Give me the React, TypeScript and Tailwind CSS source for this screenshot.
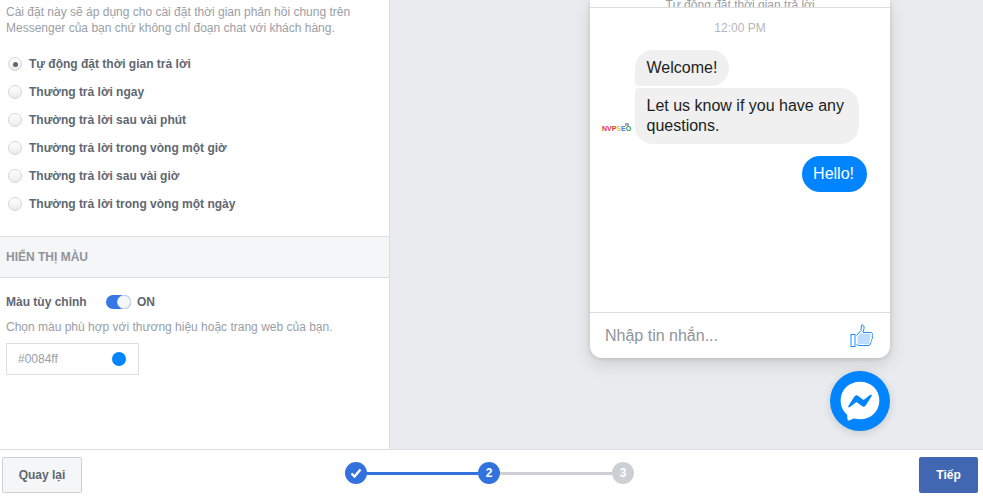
import { FaFacebookMessenger } from 'react-icons/fa';

const options = [
  'Tự động đặt thời gian trả lời',
  'Thường trả lời ngay',
  'Thường trả lời sau vài phút',
  'Thường trả lời trong vòng một giờ',
  'Thường trả lời sau vài giờ',
  'Thường trả lời trong vòng một ngày',
];

function Radio({ label, checked }: { label: string; checked: boolean }) {
  return (
    <div className="flex h-7 items-center pl-2">
      <span className="flex h-[14px] w-[14px] items-center justify-center rounded-full border border-[#d3d6db] bg-linear-to-b from-white to-[#e9ebee]">
        {checked && <span className="h-[5px] w-[5px] rounded-full bg-[#606770]" />}
      </span>
      <span className="ml-[7px] text-xs font-bold text-[#606770]">{label}</span>
    </div>
  );
}

function SettingsPanel() {
  return (
    <div className="w-[390px] shrink-0 border-r border-[#dadde1] bg-white">
      <p className="px-[6px] pt-[4px] text-xs leading-4 text-[#9a9ea6]">
        Cài đặt này sẽ áp dụng cho cài đặt thời gian phản hồi chung trên
        <br />
        Messenger của bạn chứ không chỉ đoạn chat với khách hàng.
      </p>
      <div className="mt-[14px]">
        {options.map((label, index) => (
          <Radio key={label} label={label} checked={index === 0} />
        ))}
      </div>
      <div className="mt-[18px] flex h-[42px] items-center border-y border-[#dadde1] bg-[#f5f6f7] px-[6px] text-xs font-bold text-[#90949c]">
        HIỂN THỊ MÀU
      </div>
      <div className="flex items-center pl-[6px] pt-[16px]">
        <span className="w-[100px] text-xs font-bold text-[#606770]">Màu tùy chỉnh</span>
        <span className="flex h-[14px] w-[25px] justify-end rounded-full bg-[#3578e5]">
          <span className="h-[14px] w-[14px] rounded-full border border-[#dadde1] bg-[#f5f6f7]" />
        </span>
        <span className="ml-[6px] text-xs font-bold text-[#606770]">ON</span>
      </div>
      <p className="px-[6px] pt-[9px] text-xs leading-4 text-[#9a9ea6]">
        Chọn màu phù hợp với thương hiệu hoặc trang web của bạn.
      </p>
      <div className="ml-[6px] mt-[8px] flex h-[32px] w-[133px] items-center justify-between border border-[#dddfe2] pl-[11px] pr-[12px] text-xs text-[#9a9ea6]">
        #0084ff
        <span className="h-[14px] w-[14px] rounded-full bg-[#0084ff]" />
      </div>
    </div>
  );
}

// thumb outline with a pale fill, the cuff stays empty
function LikeIcon() {
  return (
    <svg width="24" height="24" viewBox="0 0 24 24" fill="none" stroke="#1f8fff" strokeWidth="1">
      <rect x="1" y="10.5" width="4" height="12" />
      <path
        d="M6.5 11.5 L11 6.5 L11.5 1 C13.5 0.5 14.5 2.5 14 4.5 L13 8.5 L20.5 8.5 C23 8.5 23 11 22 12 C23 13.5 22.5 15 21.5 15.5 C22 17 21.5 18.5 20.5 19 C20.5 21 19.5 21.5 18 21.5 L9 21.5 L6.5 20.5"
      />
      <path d="M7.5 12.5 L11 9 L13 10 L20.5 10 L19.5 20 L9 20 L7.5 19.5 Z" fill="#bcdcff" stroke="none" />
    </svg>
  );
}

function ChatPreview() {
  return (
    <div className="flex min-w-0 flex-1 flex-col items-start overflow-hidden bg-[#e9ebee] pl-[200px]">
      <div className="flex h-[358px] w-[300px] shrink-0 flex-col rounded-b-[12px] bg-white text-[16px] leading-5 shadow-[0_6px_18px_rgba(0,0,0,0.12),0_1px_4px_rgba(0,0,0,0.14)]">
        <div className="h-[8px] overflow-hidden border-b border-[#dadde1] text-center text-xs leading-[10px] text-[#9a9ea6]">
          Tự động đặt thời gian trả lời
        </div>
        <div className="pt-[12px] text-center text-xs leading-4 text-[#b4b7bd]">12:00 PM</div>
        <div className="mt-[14px] flex flex-1 flex-col">
          <div className="ml-[45px] w-fit rounded-[18px] rounded-bl-[4px] bg-[#f1f0f0] py-2 pl-[11.5px] pr-[11.5px] text-[#1c1e21]">
            Welcome!
          </div>
          <div className="mt-[2px] flex items-end">
            <div className="relative mb-[10px] ml-[12px] mr-[4px] flex w-[29px] text-[7px] leading-[10px] font-bold">
              <span className="text-[#e5323e]">NV</span>
              <span className="text-[#e5323e]">P</span>
              <span className="text-[#f5c518]">S</span>
              <span className="text-[#3b82f6]">E</span>
              <span className="text-[#16a34a]">O</span>
              <span className="absolute right-[2px] top-[-1px] h-[3px] w-[4px] bg-[#a8abaf]" />
            </div>
            <div className="w-[224px] rounded-[18px] rounded-tl-[4px] bg-[#f1f0f0] py-2 pl-[11.5px] pr-3 text-[#1c1e21]">
              Let us know if you have any questions.
            </div>
          </div>
          <div className="mr-[23px] mt-[12px] self-end rounded-[18px] bg-[#0084ff] py-2 pl-[11px] pr-[13px] text-white">
            Hello!
          </div>
        </div>
        <div className="flex h-[46px] items-center justify-between border-t border-[#dadde1] pl-[15px] pr-[16px] text-[#90949c]">
          Nhập tin nhắn...
          <LikeIcon />
        </div>
      </div>
      <div className="ml-[240px] mt-[13px] flex h-[60px] w-[60px] shrink-0 items-center justify-center rounded-full bg-[#0084ff] shadow-[0_2px_8px_rgba(0,0,0,0.14)]">
        <FaFacebookMessenger className="h-[40px] w-[40px] text-white" />
      </div>
    </div>
  );
}

function Stepper() {
  return (
    <div className="ml-[263px] flex items-center text-xs font-bold text-white">
      <span className="flex h-[22px] w-[22px] items-center justify-center rounded-full bg-[#3172dc]">
        <svg width="12" height="12" viewBox="0 0 12 12" fill="none" stroke="white" strokeWidth="2.4">
          <path d="M1.5 6.5 L4.5 9.5 L10.5 2.5" />
        </svg>
      </span>
      <span className="h-[3px] w-[111px] bg-[#3172dc]" />
      <span className="flex h-[22px] w-[22px] items-center justify-center rounded-full bg-[#3172dc]">2</span>
      <span className="h-[3px] w-[112px] bg-[#ccd0d5]" />
      <span className="flex h-[22px] w-[22px] items-center justify-center rounded-full bg-[#ccd0d5]">3</span>
    </div>
  );
}

export default function App() {
  return (
    <div className="flex h-[501px] w-[983px] flex-col overflow-hidden bg-white font-['Liberation_Sans',Arial,sans-serif]">
      <div className="flex h-[449px] shrink-0">
        <SettingsPanel />
        <ChatPreview />
      </div>
      <div className="flex flex-1 items-start border-t border-[#dadde1] pl-[2px] pt-[7px]">
        <button className="h-[36px] w-[80px] rounded-[2px] border border-[#ccd0d5] bg-[#f5f6f7] text-xs font-bold text-[#606770]">
          Quay lại
        </button>
        <div className="mt-[5px]">
          <Stepper />
        </div>
        <button className="ml-auto mr-[5px] h-[36px] w-[59px] rounded-[2px] bg-[#4267b2] text-xs font-bold text-white">
          Tiếp
        </button>
      </div>
    </div>
  );
}
